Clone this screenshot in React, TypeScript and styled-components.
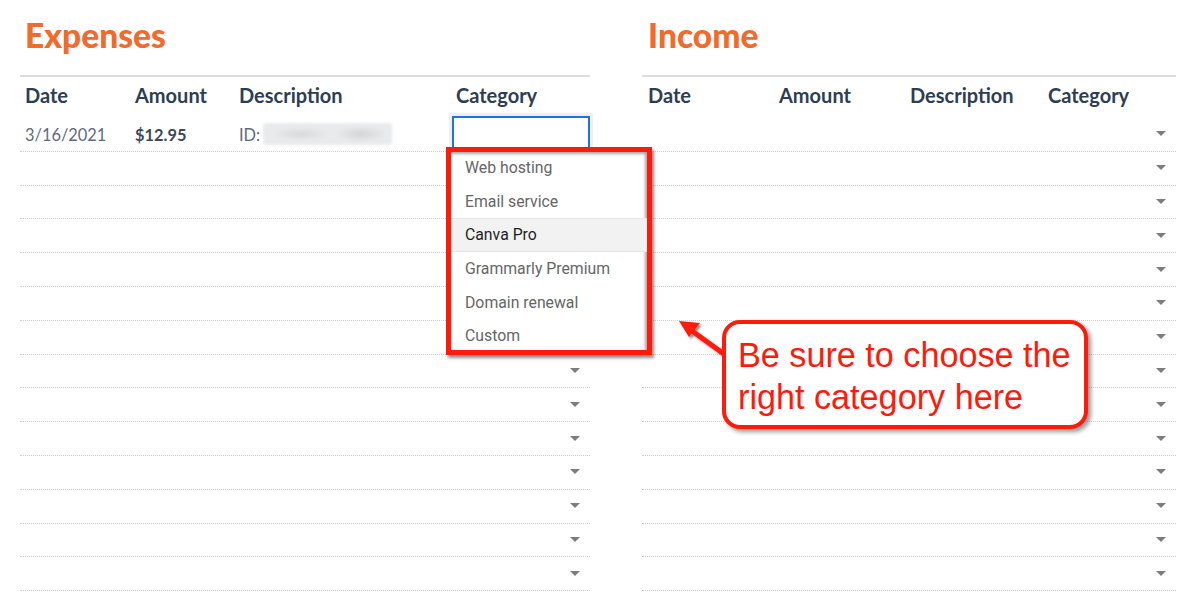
import React from "react";
import styled, { createGlobalStyle } from "styled-components";

const GlobalStyle = createGlobalStyle`
  html, body {
    margin: 0;
    padding: 0;
    background: #ffffff;
  }
  body {
    font-family: Lato, "Open Sans", sans-serif;
  }
`;

const Page = styled.div`
  position: relative;
  width: 1200px;
  height: 592px;
  overflow: hidden;
  display: flex;
  gap: 52px;
  padding-left: 20px;
  box-sizing: border-box;
`;

const Section = styled.section<{ $width: number }>`
  width: ${(p) => p.$width}px;
  display: flex;
  flex-direction: column;
`;

const Title = styled.h1<{ $indent: number }>`
  margin: 0;
  height: 75px;
  box-sizing: border-box;
  padding: 15px 0 0 ${(p) => p.$indent}px;
  font-family: Lato, sans-serif;
  font-weight: 900;
  font-size: 33.5px;
  line-height: 40px;
  color: #f26a2c;
`;

const Table = styled.div`
  border-top: 2px solid #dcdcdc;
  display: flex;
  flex-direction: column;
`;

const HeadRow = styled.div`
  display: flex;
  height: 41px;
  box-sizing: border-box;
  padding-bottom: 5px;
  align-items: center;
`;

const Row = styled.div`
  position: relative;
  display: flex;
  height: 33.8px;
  align-items: center;
  box-sizing: border-box;
  border-bottom: 1px dotted #cfcfcf;
`;

const HeadCell = styled.div<{ $w: number; $pad?: number }>`
  width: ${(p) => p.$w}px;
  padding-left: ${(p) => p.$pad ?? 5}px;
  box-sizing: border-box;
  font-weight: 700;
  font-size: 20px;
  color: #2e3e52;
`;

const Cell = styled.div<{ $w: number; $bold?: boolean }>`
  width: ${(p) => p.$w}px;
  padding-left: 5px;
  box-sizing: border-box;
  display: flex;
  align-items: center;
  font-size: 16.4px;
  font-weight: ${(p) => (p.$bold ? 700 : 400)};
  color: ${(p) => (p.$bold ? "#3b4858" : "#5f6b79")};
`;

const Blurred = styled.span`
  display: inline-block;
  width: 129px;
  height: 22px;
  margin-left: 3px;
  border-radius: 3px;
  background:
    radial-gradient(ellipse 28px 7px at 38px 11px, #d7d8da, transparent),
    radial-gradient(ellipse 26px 8px at 98px 11px, #d3d4d6, transparent),
    #e9eaec;
  filter: blur(1.5px);
`;

const Caret = styled.span`
  position: absolute;
  right: 10px;
  top: 50%;
  margin-top: -3px;
  width: 0;
  height: 0;
  border-left: 5px solid transparent;
  border-right: 5px solid transparent;
  border-top: 5px solid #7d7d7d;
`;

const Selected = styled.div`
  position: absolute;
  left: 432px;
  top: -2px;
  width: 138px;
  height: 34px;
  box-sizing: border-box;
  border: 2px solid #1a73e8;
  background: #fff;
  box-shadow: 0 0 0 3px #f0f0f0;
`;

const Menu = styled.ul`
  position: absolute;
  left: 446px;
  top: 147px;
  width: 206px;
  height: 208px;
  margin: 0;
  padding: 0;
  list-style: none;
  box-sizing: border-box;
  border: 5px solid #ff1a0a;
  background: #fff;
  box-shadow:
    inset -2px 2px 3px rgba(0, 0, 0, 0.35),
    2px 3px 3px rgba(0, 0, 0, 0.45);
  overflow: hidden;
`;

const MenuItem = styled.li<{ $active?: boolean }>`
  height: 33.6px;
  display: flex;
  align-items: center;
  padding-left: 14px;
  font-family: Roboto, "Liberation Sans", sans-serif;
  font-size: 15.8px;
  color: ${(p) => (p.$active ? "#1f1f1f" : "#666666")};
  background: ${(p) => (p.$active ? "#f2f2f2" : "transparent")};
  border-top: ${(p) => (p.$active ? "1px solid #e6e6e6" : "none")};
  border-bottom: ${(p) => (p.$active ? "1px solid #e6e6e6" : "none")};
  box-sizing: border-box;
  &:first-child {
    margin-top: -1px;
  }
`;

const Callout = styled.div`
  position: absolute;
  left: 722px;
  top: 320px;
  width: 366px;
  height: 109px;
  box-sizing: border-box;
  border: 4px solid #ff1a0a;
  border-radius: 18px;
  background: #fff;
  box-shadow: 3px 3px 4px rgba(0, 0, 0, 0.4);
  padding: 10px 0 0 12px;
  font-family: "Liberation Sans", Arial, sans-serif;
  font-size: 34.2px;
  line-height: 42px;
  color: #ff1a0a;
  white-space: nowrap;
`;

const Pointer = styled.svg`
  position: absolute;
  left: 670px;
  top: 310px;
  overflow: visible;
`;

const leftCols = [110, 104, 217, 139];
const rightCols = [131, 131, 138, 134];
const menuItems = [
  "Web hosting",
  "Email service",
  "Canva Pro",
  "Grammarly Premium",
  "Domain renewal",
  "Custom",
];

const heads = ["Date", "Amount", "Description", "Category"];

export default function App() {
  const rows = Array.from({ length: 14 }, (_, i) => i);
  return (
    <>
      <GlobalStyle />
      <Page>
        <Section $width={570}>
          <Title $indent={5}>Expenses</Title>
          <Table>
            <HeadRow>
              {heads.map((h, i) => (
                <HeadCell key={h} $w={leftCols[i]}>
                  {h}
                </HeadCell>
              ))}
            </HeadRow>
            {rows.map((i) =>
              i === 0 ? (
                <Row key={i}>
                  <Cell $w={leftCols[0]}>3/16/2021</Cell>
                  <Cell $w={leftCols[1]} $bold>
                    $12.95
                  </Cell>
                  <Cell $w={leftCols[2]}>
                    ID:
                    <Blurred />
                  </Cell>
                  <Selected />
                </Row>
              ) : (
                <Row key={i}>
                  <Caret />
                </Row>
              )
            )}
          </Table>
        </Section>
        <Section $width={534}>
          <Title $indent={6}>Income</Title>
          <Table>
            <HeadRow>
              {heads.map((h, i) => (
                <HeadCell key={h} $w={rightCols[i]} $pad={6}>
                  {h}
                </HeadCell>
              ))}
            </HeadRow>
            {rows.map((i) => (
              <Row key={i}>
                <Caret />
              </Row>
            ))}
          </Table>
        </Section>

        <Menu>
          {menuItems.map((m) => (
            <MenuItem key={m} $active={m === "Canva Pro"}>
              {m}
            </MenuItem>
          ))}
        </Menu>

        <Pointer width="60" height="50">
          <defs>
            <filter id="sh" x="-50%" y="-50%" width="200%" height="200%">
              <feDropShadow dx="2" dy="2" stdDeviation="1.2" floodColor="#000" floodOpacity="0.45" />
            </filter>
          </defs>
          <g filter="url(#sh)">
            <line x1="54" y1="44" x2="18" y2="18" stroke="#ff1a0a" strokeWidth="5" />
            <polygon points="9,11 30,13 19,27" fill="#ff1a0a" />
          </g>
        </Pointer>

        <Callout>
          Be sure to choose the
          <br />
          right category here
        </Callout>
      </Page>
    </>
  );
}
